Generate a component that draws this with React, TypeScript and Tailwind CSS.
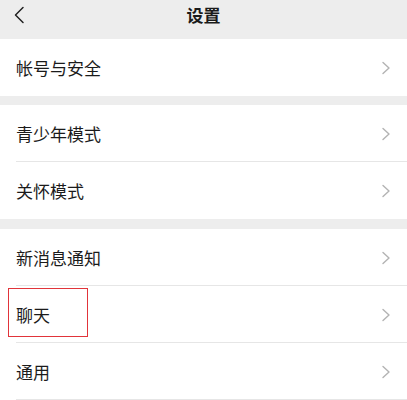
import React from 'react';

const font = { fontFamily: '"Noto Sans CJK SC", "Noto Sans", sans-serif' };

const Chevron: React.FC = () => (
  <svg width="10" height="14" viewBox="0 0 10 14" fill="none" className="shrink-0">
    <path d="M2 1.5 L8 7 L2 12.5" stroke="#b3b3b3" strokeWidth="1.4" strokeLinecap="round" strokeLinejoin="round" />
  </svg>
);

type RowProps = { label: string; divider?: boolean; highlight?: boolean };

const Row: React.FC<RowProps> = ({ label, divider, highlight }) => (
  <div className="relative flex h-[57px] items-center justify-between bg-white pl-4 pr-[16px]">
    <span className="text-[17px] leading-none text-[#1b1b1b]">{label}</span>
    <Chevron />
    {divider && <div className="absolute bottom-0 left-4 right-0 h-px bg-[#e6e6e6]" />}
    {highlight && (
      <div className="absolute left-2 top-[2px] h-[49px] w-[80px] border-[1.5px] border-[#e1343a]" />
    )}
  </div>
);

export default function App() {
  return (
    <div className="w-[407px] h-[400px] overflow-hidden bg-[#ededed]" style={font}>
      {/* header */}
      <div className="h-[39px]">
        <div className="relative flex h-[30px] items-center justify-center">
          <svg width="12" height="18" viewBox="0 0 12 18" fill="none" className="absolute left-[13px] top-[6px]">
            <path d="M10 1.5 L2.5 9 L10 16.5" stroke="#222" strokeWidth="1.5" strokeLinecap="round" strokeLinejoin="round" />
          </svg>
          <span className="text-[17px] font-semibold text-[#1b1b1b]">设置</span>
        </div>
      </div>

      <Row label="帐号与安全" />

      <div className="h-[9px]" />
      <Row label="青少年模式" divider />
      <Row label="关怀模式" />

      <div className="h-[10px]" />
      <Row label="新消息通知" divider />
      <Row label="聊天" divider highlight />
      <Row label="通用" divider />
    </div>
  );
}
